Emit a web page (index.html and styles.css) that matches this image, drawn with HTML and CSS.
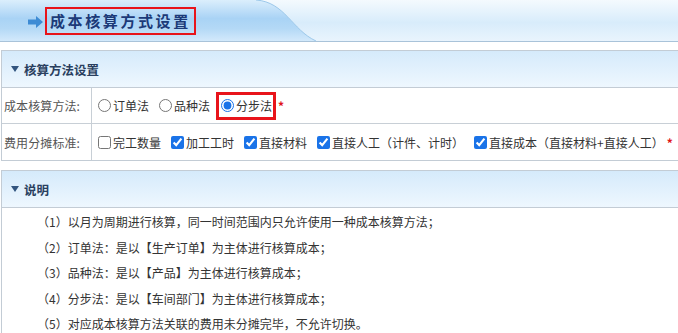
FILE: index.html
```html
<!DOCTYPE html>
<html>
<head>
<meta charset="utf-8">
<link rel="stylesheet" href="styles.css">
</head>
<body>
<div class="banner">
  <svg class="wave" width="678" height="41" viewBox="0 0 678 41">
    <defs>
      <linearGradient id="gl" x1="0" y1="0" x2="0" y2="1">
        <stop offset="0" stop-color="#dbeefc"/>
        <stop offset="0.45" stop-color="#a9d3f5"/>
        <stop offset="0.7" stop-color="#b4d9f6"/>
        <stop offset="1" stop-color="#d3e9fb"/>
      </linearGradient>
      <linearGradient id="gr" x1="0" y1="0" x2="0" y2="1">
        <stop offset="0" stop-color="#f4fafe"/>
        <stop offset="0.55" stop-color="#d8ecfb"/>
        <stop offset="1" stop-color="#e9f4fd"/>
      </linearGradient>
    </defs>
    <rect x="0" y="0" width="678" height="41" fill="url(#gr)"/>
    <path d="M0 0 L256 0 C285 2 292 30 316 41 L0 41 Z" fill="url(#gl)"/>
    <path d="M256 0 C285 2 292 30 316 41" fill="none" stroke="#9cc8ea" stroke-width="1"/>
  </svg>
  <div class="title-wrap">
    <svg class="arrow" width="15" height="12" viewBox="0 0 15 12"><path d="M0 3.5 H8 V0 L15 6 L8 12 V8.5 H0 Z" fill="#3d8bd4"/></svg>
    <span class="title">成本核算方式设置</span>
  </div>
</div>

<div class="panel p1">
  <div class="phead"><svg class="tri" width="8" height="6" viewBox="0 0 8 6"><path d="M0 0 H8 L4 6 Z" fill="#33557f"/></svg>核算方法设置</div>
  <div class="row">
    <div class="lbl">成本核算方法:</div>
    <div class="val">
      <label class="opt"><input type="radio" name="m">订单法</label>
      <label class="opt"><input type="radio" name="m">品种法</label>
      <label class="opt hl"><input type="radio" name="m" checked>分步法</label><span class="req">*</span>
    </div>
  </div>
  <div class="row">
    <div class="lbl">费用分摊标准:</div>
    <div class="val">
      <label class="opt"><input type="checkbox">完工数量</label>
      <label class="opt"><input type="checkbox" checked>加工工时</label>
      <label class="opt"><input type="checkbox" checked>直接材料</label>
      <label class="opt"><input type="checkbox" checked>直接人工（计件、计时）</label>
      <label class="opt last"><input type="checkbox" checked>直接成本（直接材料+直接人工）</label><span class="req">*</span>
    </div>
  </div>
</div>

<div class="panel p2">
  <div class="phead"><svg class="tri" width="8" height="6" viewBox="0 0 8 6"><path d="M0 0 H8 L4 6 Z" fill="#33557f"/></svg>说明</div>
  <div class="desc">
    <p>（1）以月为周期进行核算，同一时间范围内只允许使用一种成本核算方法；</p>
    <p>（2）订单法：是以【生产订单】为主体进行核算成本；</p>
    <p>（3）品种法：是以【产品】为主体进行核算成本；</p>
    <p>（4）分步法：是以【车间部门】为主体进行核算成本；</p>
    <p>（5）对应成本核算方法关联的费用未分摊完毕，不允许切换。</p>
  </div>
</div>
</body>
</html>
```

FILE: styles.css
```css
* { box-sizing: border-box; }
html, body { margin: 0; padding: 0; background: #fff; }
body {
  font-family: "Noto Sans CJK SC", "Noto Sans", sans-serif;
  font-size: 12px;
  color: #333;
  width: 678px;
  overflow: hidden;
}
.banner {
  position: relative;
  height: 42px;
  border-bottom: 1px solid #a9c3d9;
}
.wave { position: absolute; left: 0; top: 0; }
.title-wrap {
  position: relative;
  display: flex;
  align-items: center;
  padding: 7px 0 0 28px;
}
.arrow { margin-right: 2px; margin-top: 1px; }
.title {
  display: inline-block;
  height: 28px;
  line-height: 24px;
  padding: 0 3px 0 3px;
  border: 2px solid #e8141b;
  font-weight: bold;
  font-size: 15px;
  letter-spacing: 2.6px;
  color: #1c3a78;
}
.panel {
  margin-left: 1px;
  border: 1px solid #c3ccd5;
  border-right: none;
}
.p1 { margin-top: 8px; }
.p2 { margin-top: 9px; }
.phead {
  height: 37px;
  display: flex;
  align-items: center;
  padding-left: 9px;
  font-weight: bold;
  font-size: 12.5px;
  color: #2a3f5f;
  background: linear-gradient(#d5eafb, #eef7fe);
  border-bottom: 1px solid #c3ccd5;
}
.tri { margin-right: 5px; }
.row {
  display: flex;
  height: 36px;
  border-bottom: 1px solid #c8cfd6;
}
.row:last-child { border-bottom: none; }
.lbl {
  width: 90px;
  flex: none;
  padding-left: 2px;
  display: flex;
  align-items: center;
  color: #555;
  border-right: 1px solid #c8cfd6;
  letter-spacing: 0.1px;
}
.val {
  display: flex;
  align-items: center;
  padding-left: 6px;
  white-space: nowrap;
}
.opt {
  display: inline-flex;
  align-items: center;
  margin-right: 10px;
  color: #333;
}
.opt.last { margin-right: 3px; }
.opt input {
  width: 13px;
  height: 13px;
  margin: 0 2px 0 0;
  accent-color: #1a73e8;
}
.opt.hl {
  border: 3px solid #e8141b;
  height: 28px;
  padding: 0 1px 0 2px;
  margin-right: 2px;
  margin-left: -4px;
}
.req {
  color: #e0141b;
  font-weight: bold;
}
.desc {
  padding: 1px 0 4px 35px;
}
.desc p {
  margin: 0;
  line-height: 25.5px;
  color: #333;
}
```
